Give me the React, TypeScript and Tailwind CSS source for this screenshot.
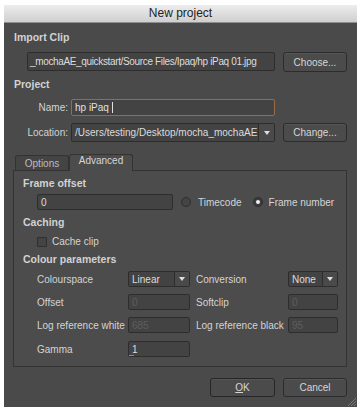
import type { ReactNode } from 'react';

const font = { fontFamily: '"Liberation Sans", Arial, sans-serif' };

function Header({ children, className = '' }: { children: ReactNode; className?: string }) {
  return <div className={`h-[12px] leading-[12px] text-[10.5px] font-bold text-[#d2d2d2] ${className}`}>{children}</div>;
}

function Field({ value, className = '', disabled = false }: { value: string; className?: string; disabled?: boolean }) {
  return (
    <div
      className={`h-[16px] flex items-center px-[3px] border border-[#2d2d2d] bg-[#434343] rounded-[2px] text-[10px] ${
        disabled ? 'text-[#5e5e5e]' : 'text-[#dcdcdc]'
      } ${className}`}
    >
      {value}
    </div>
  );
}

function Button({ children, className = '' }: { children: ReactNode; className?: string }) {
  return (
    <div
      className={`flex items-center justify-center border border-[#2c2c2c] bg-[#4b4b4b] rounded-[3px] shadow-[inset_0_1px_0_#565656] text-[10px] text-[#d6d6d6] ${className}`}
    >
      {children}
    </div>
  );
}

function Arrow() {
  return <div className="w-0 h-0 border-l-[3px] border-r-[3px] border-t-[4px] border-l-transparent border-r-transparent border-t-[#dedede]" />;
}

function Combo({ value, className = '', arrowW = 'w-[15px]' }: { value: string; className?: string; arrowW?: string }) {
  return (
    <div className={`h-[16px] flex border border-[#2d2d2d] bg-[#434343] rounded-[2px] text-[10px] text-[#dcdcdc] ${className}`}>
      <div className="flex-1 flex items-center px-[3px] overflow-hidden whitespace-nowrap">{value}</div>
      <div className={`${arrowW} flex items-center justify-center border-l border-[#2d2d2d] bg-[#4a4a4a]`}>
        <Arrow />
      </div>
    </div>
  );
}

function Label({ children, className = '' }: { children: ReactNode; className?: string }) {
  return <div className={`text-[10px] text-[#d4d4d4] whitespace-nowrap ${className}`}>{children}</div>;
}

export default function App() {
  return (
    <div className="w-[361px] h-[409px] bg-white overflow-hidden" style={font}>
      <div className="ml-[4px] mt-[5px] w-[353px] h-[402px] bg-[#4a4a4a] flex flex-col">
        {/* Title bar */}
        <div className="h-[18px] shrink-0 bg-gradient-to-b from-[#ededed] to-[#cfcfcf] border-b border-[#8e8e8e] text-center text-[12px] leading-[17px] text-[#222]">
          New project
        </div>

        <div className="flex flex-col pl-[10px] pr-[10px]">
          <Header className="mt-[8px]">Import Clip</Header>
          <div className="mt-[9px] flex items-start">
            <div className="ml-[13px] w-[248px] h-[19px] flex items-center px-[2px] border border-[#2d2d2d] bg-[#434343] rounded-[2px] text-[10px] tracking-[-0.35px] text-[#dcdcdc] whitespace-nowrap overflow-hidden">
              _mochaAE_quickstart/Source Files/Ipaq/hp iPaq 01.jpg
            </div>
            <Button className="ml-[8px] w-[64px] h-[20px]">Choose...</Button>
          </div>

          <Header className="mt-[6px]">Project</Header>
          <div className="mt-[9px] flex items-center">
            <Label className="w-[54px] text-right">Name:</Label>
            <div className="ml-[3px] w-[204px] h-[17px] flex items-center px-[3px] border border-[#9c6a45] bg-[#434343] rounded-[2px] text-[10px] text-[#e0e0e0]">
              hp iPaq
              <span className="ml-[3px] w-px h-[11px] bg-[#e0e0e0]" />
            </div>
          </div>
          <div className="mt-[7px] flex items-center">
            <Label className="w-[54px] text-right">Location:</Label>
            <Combo className="ml-[3px] w-[204px] !h-[19px]" arrowW="w-[16px]" value="/Users/testing/Desktop/mocha_mochaAE" />
            <Button className="ml-[8px] w-[64px] h-[19px]">Change...</Button>
          </div>

          {/* Tabs */}
          <div className="mt-[11px] h-[17px] flex items-end">
            <div className="ml-[1px] w-[54px] h-[15px] border border-b-0 border-[#333] rounded-t-[3px] bg-[#444] text-[10px] text-[#bdbdbd] text-center leading-[16px]">
              Options
            </div>
            <div className="w-[64px] h-[17px] -mb-px border border-b-0 border-[#333] rounded-t-[3px] bg-[#4c4c4c] text-[10px] text-[#d6d6d6] text-center leading-[12px] relative z-10">
              Advanced
            </div>
          </div>

          {/* Panel */}
          <div className="-ml-[1px] h-[197px] border border-[#333] bg-[#4c4c4c] flex flex-col pl-[9px]">
            <Header className="mt-[6px]">Frame offset</Header>
            <div className="mt-[5px] flex items-center">
              <Field value="0" className="ml-[14px] w-[136px]" />
              <span className="ml-[8px] w-[10px] h-[10px] rounded-full border border-[#2e2e2e] bg-[#444]" />
              <Label className="ml-[7px]">Timecode</Label>
              <span className="ml-[11px] w-[10px] h-[10px] rounded-full border border-[#2e2e2e] bg-[#3c3c3c] flex items-center justify-center">
                <span className="w-[4px] h-[4px] rounded-full bg-[#f0f0f0]" />
              </span>
              <Label className="ml-[6px]">Frame number</Label>
            </div>

            <Header className="mt-[6px]">Caching</Header>
            <div className="mt-[7px] h-[13px] flex items-center">
              <span className="ml-[14px] w-[10px] h-[10px] border border-[#2e2e2e] bg-[#444] rounded-[1px]" />
              <Label className="ml-[5px]">Cache clip</Label>
            </div>

            <Header className="mt-[5px]">Colour parameters</Header>
            <div className="mt-[6px] ml-[14px] flex items-center">
              <Label className="w-[91px]">Colourspace</Label>
              <Combo className="w-[62px]" value="Linear" />
              <Label className="ml-[6px] w-[92px]">Conversion</Label>
              <Combo className="w-[50px]" value="None" />
            </div>
            <div className="mt-[7px] ml-[14px] flex items-center">
              <Label className="w-[91px]">Offset</Label>
              <Field value="0" disabled className="w-[62px]" />
              <Label className="ml-[6px] w-[92px]">Softclip</Label>
              <Field value="0" disabled className="w-[50px]" />
            </div>
            <div className="mt-[7px] ml-[14px] flex items-center">
              <Label className="w-[91px]">Log reference white</Label>
              <Field value="685" disabled className="w-[62px]" />
              <Label className="ml-[6px] w-[92px]">Log reference black</Label>
              <Field value="95" disabled className="w-[50px]" />
            </div>
            <div className="mt-[8px] ml-[14px] flex items-center">
              <Label className="w-[91px]">Gamma</Label>
              <div className="relative">
                <Field value="1" className="w-[62px]" />
                <span className="absolute left-[1px] bottom-[1px] w-[5px] h-px bg-[#d07a3a]" />
              </div>
            </div>
          </div>

          {/* Buttons */}
          <div className="mt-[11px] flex justify-end">
            <Button className="w-[65px] h-[19px] !border-[#262626]">
              <span className="underline">O</span>K
            </Button>
            <Button className="ml-[8px] w-[64px] h-[19px]">Cancel</Button>
          </div>
        </div>

        {/* Resize grip */}
        <div className="mt-auto flex justify-end pr-[1px] pb-[1px]">
          <svg width="9" height="9" viewBox="0 0 9 9">
            <line x1="1" y1="9" x2="9" y2="1" stroke="#7a7a7a" strokeWidth="1" />
            <line x1="4" y1="9" x2="9" y2="4" stroke="#7a7a7a" strokeWidth="1" />
            <line x1="7" y1="9" x2="9" y2="7" stroke="#7a7a7a" strokeWidth="1" />
          </svg>
        </div>
      </div>
    </div>
  );
}
